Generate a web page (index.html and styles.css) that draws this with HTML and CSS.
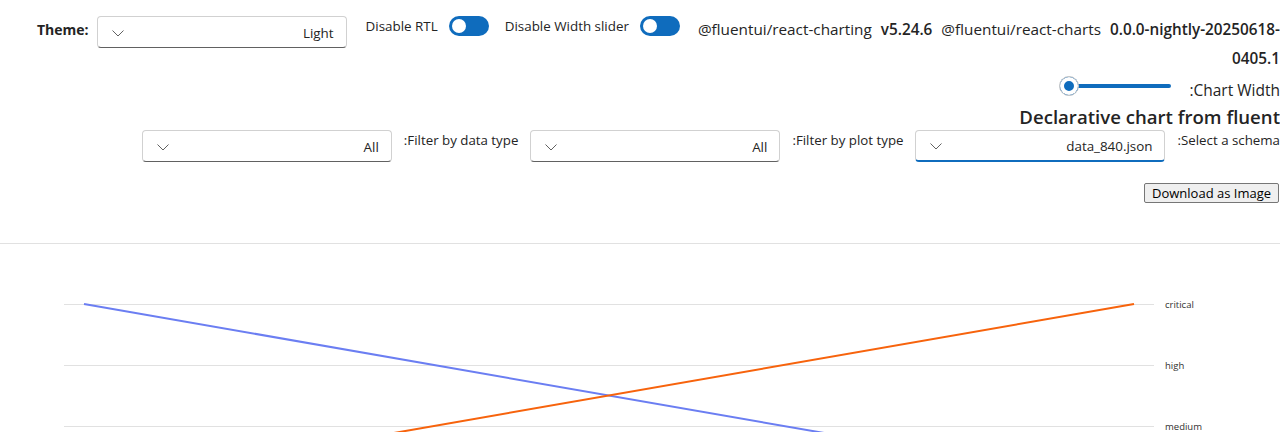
FILE: index.html
```html
<!DOCTYPE html>
<html lang="en">
<head>
<meta charset="utf-8">
<title>Declarative chart</title>
<link rel="stylesheet" href="styles.css">
</head>
<body>
<div class="page">
  <div class="topbar">
    <label class="theme-label">Theme:</label>
    <div class="dropdown theme-dd" dir="rtl">
      <span class="dd-value">Light</span>
      <svg class="chev" width="12" height="7" viewBox="0 0 12 7"><path d="M0.5 0.5 L6 6 L11.5 0.5" fill="none" stroke="#616161" stroke-width="1"/></svg>
    </div>
    <div class="switch-group">
      <span class="switch-label">Disable RTL</span>
      <span class="switch"><span class="knob"></span></span>
    </div>
    <div class="switch-group">
      <span class="switch-label">Disable Width slider</span>
      <span class="switch"><span class="knob"></span></span>
    </div>
    <div class="versions">
      <span class="pkg">@fluentui/react-charting</span><b class="ver">v5.24.6</b><span class="pkg">@fluentui/react-charts</span><b class="ver">0.0.0-nightly-20250618-<br>0405.1</b>
    </div>
  </div>

  <div class="slider-row" dir="rtl">
    <label class="slider-label">Chart Width:</label>
    <div class="slider">
      <span class="track"></span>
      <span class="thumb"></span>
    </div>
  </div>

  <h2 class="title">Declarative chart from fluent</h2>

  <div class="filter-row" dir="rtl">
    <label class="filter-label">Select a schema:</label>
    <div class="dropdown focused">
      <span class="dd-value">data_840.json</span>
      <svg class="chev" width="12" height="7" viewBox="0 0 12 7"><path d="M0.5 0.5 L6 6 L11.5 0.5" fill="none" stroke="#616161" stroke-width="1"/></svg>
    </div>
    <label class="filter-label">Filter by plot type:</label>
    <div class="dropdown">
      <span class="dd-value">All</span>
      <svg class="chev" width="12" height="7" viewBox="0 0 12 7"><path d="M0.5 0.5 L6 6 L11.5 0.5" fill="none" stroke="#616161" stroke-width="1"/></svg>
    </div>
    <label class="filter-label">Filter by data type:</label>
    <div class="dropdown">
      <span class="dd-value">All</span>
      <svg class="chev" width="12" height="7" viewBox="0 0 12 7"><path d="M0.5 0.5 L6 6 L11.5 0.5" fill="none" stroke="#616161" stroke-width="1"/></svg>
    </div>
  </div>

  <div class="download-row">
    <button class="download-btn">Download as Image</button>
  </div>

  <hr class="divider">

  <svg class="chart" width="1280" height="188" viewBox="0 0 1280 188">
    <g class="grid">
      <line x1="64" y1="60.5" x2="1154" y2="60.5"/>
      <line x1="64" y1="121.5" x2="1154" y2="121.5"/>
      <line x1="64" y1="182.5" x2="1154" y2="182.5"/>
    </g>
    <g class="ticks">
      <text x="1165" y="64">critical</text>
      <text x="1165" y="125">high</text>
      <text x="1165" y="186">medium</text>
    </g>
    <polyline points="84,60 1134,243" fill="none" stroke="#6b7ef2" stroke-width="2"/>
    <polyline points="84,243 1134,60" fill="none" stroke="#f7630c" stroke-width="2"/>
    <text class="axis-title" transform="translate(1245 222) rotate(-90)">Severity</text>
  </svg>
</div>
</body>
</html>
```

FILE: styles.css
```css
html, body {
  margin: 0;
  padding: 0;
  background: #ffffff;
}

body {
  font-family: "Segoe UI", "Open Sans", "Noto Sans", sans-serif;
  font-size: 13.4px;
  color: #242424;
  overflow: hidden;
}

.page {
  width: 1280px;
}

/* ---------- top bar ---------- */
.topbar {
  display: flex;
  align-items: flex-start;
  padding: 16px 0 0 37px;
}

.theme-label {
  font-weight: 700;
  font-size: 14px;
  line-height: 28px;
  margin-right: 8px;
}

.dropdown {
  box-sizing: border-box;
  width: 250px;
  height: 32px;
  border: 1px solid #d1d1d1;
  border-bottom-color: #616161;
  border-radius: 4px;
  background: #fff;
  display: flex;
  align-items: center;
  padding: 0 12px 0 14px;
  flex-shrink: 0;
}

.dd-value {
  flex: 1;
  text-align: right;
  line-height: 20px;
  padding-top: 1px;
}

.chev {
  display: block;
  flex-shrink: 0;
  margin-top: 2px;
}

.dropdown.focused {
  border-bottom: 2px solid #0f6cbd;
}

.switch-group {
  display: flex;
  align-items: center;
  margin-left: 19px;
}

.switch-group + .switch-group {
  margin-left: 16px;
}

.switch-label {
  line-height: 20px;
  margin-right: 11px;
}

.switch {
  position: relative;
  width: 40px;
  height: 20px;
  border-radius: 10px;
  background: #0f6cbd;
  display: block;
}

.knob {
  position: absolute;
  left: 3px;
  top: 3px;
  width: 14px;
  height: 14px;
  border-radius: 50%;
  background: #ffffff;
}

.versions {
  flex: 1;
  text-align: right;
  font-size: 15.3px;
  line-height: 29px;
  margin-top: -1px;
  white-space: nowrap;
}

.pkg {
  margin-left: 9px;
}

.versions .pkg:first-child {
  margin-left: 0;
}

.ver {
  font-weight: 600;
  margin-left: 9px;
}

/* ---------- slider ---------- */
.slider-row {
  display: flex;
  align-items: flex-start;
  gap: 10px;
  margin-top: 3px;
}

.slider-label {
  font-size: 15.5px;
  line-height: 20px;
  padding-top: 4px;
}

.slider {
  position: relative;
  width: 120px;
  height: 20px;
}

.track {
  position: absolute;
  left: 12px;
  right: 8px;
  top: 8px;
  height: 4px;
  border-radius: 2px;
  background: #0f6cbd;
}

.thumb {
  position: absolute;
  left: 0;
  top: 0;
  box-sizing: border-box;
  width: 20px;
  height: 20px;
  border-radius: 50%;
  background: #0f6cbd;
  border: 1px solid #c8c8c8;
  box-shadow: inset 0 0 0 4px #ffffff;
}

/* ---------- title ---------- */
.title {
  margin: 4px 0 0 0;
  font-size: 18.6px;
  font-weight: 600;
  line-height: 26px;
  text-align: right;
  white-space: nowrap;
}

/* ---------- filters ---------- */
.filter-row {
  display: flex;
  align-items: flex-start;
  gap: 12px;
}

.filter-label {
  font-size: 13.3px;
  line-height: 20px;
}

/* ---------- download ---------- */
.download-row {
  display: flex;
  justify-content: flex-end;
  margin-top: 21px;
  padding-right: 1px;
}

.download-btn {
  font-family: "Segoe UI", "Open Sans", "Noto Sans", sans-serif;
  font-size: 13px;
  color: #000;
  height: 20px;
  line-height: 16px;
  padding: 0 7px;
  background: #efefef;
  border: 1px solid #767676;
  border-radius: 2px;
}

.divider {
  margin: 40px 0 0 0;
  border: 0;
  border-top: 1px solid #e1e1e1;
  height: 0;
}

/* ---------- chart ---------- */
.chart {
  display: block;
}

.grid line {
  stroke: #e1e1e1;
  stroke-width: 1;
}

.ticks text {
  font-family: "Segoe UI", "Open Sans", "Noto Sans", sans-serif;
  font-size: 9.5px;
  fill: #323130;
}

.axis-title {
  font-family: "Segoe UI", "Open Sans", "Noto Sans", sans-serif;
  font-size: 12px;
  fill: #323130;
  text-anchor: middle;
}
```
